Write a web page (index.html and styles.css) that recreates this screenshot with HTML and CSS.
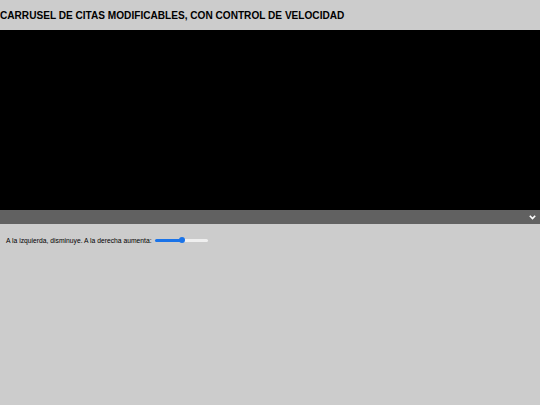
FILE: index.html
```html
<!DOCTYPE html>
<html lang="es">
<head>
<meta charset="utf-8">
<title>Carrusel de citas</title>
<link rel="stylesheet" href="styles.css">
</head>
<body>
<header class="header">
  <h1 class="title">CARRUSEL DE CITAS MODIFICABLES, CON CONTROL DE VELOCIDAD</h1>
</header>
<main>
  <div class="stage"></div>
  <div class="selectbar">
    <svg class="chevron" width="7" height="5" viewBox="0 0 7 5"><path d="M0.8 0.8 L3.5 3.6 L6.2 0.8" fill="none" stroke="#fff" stroke-width="1.6"/></svg>
  </div>
  <div class="controls">
    <label class="label" for="speed">A la izquierda, disminuye. A la derecha aumenta:</label>
    <input id="speed" class="slider" type="range" min="0" max="100" value="52">
  </div>
</main>
</body>
</html>
```
FILE: styles.css
```css
html, body {
  margin: 0;
  padding: 0;
  background: #cccccc;
  font-family: "Liberation Sans", Arial, sans-serif;
}
.header {
  height: 30px;
  display: flex;
  align-items: center;
}
.title {
  margin: 0;
  font-size: 10.1px;
  font-weight: bold;
  color: #000;
}
.stage {
  height: 180px;
  background: #000;
}
.selectbar {
  height: 14px;
  background: #616161;
  display: flex;
  align-items: center;
  justify-content: flex-end;
  padding-right: 4px;
}
.chevron {
  display: block;
}
.controls {
  display: flex;
  align-items: center;
  padding: 9px 0 0 6px;
  height: 14px;
}
.label {
  font-size: 6.75px;
  color: #000;
  margin-right: 3px;
}
.slider {
  -webkit-appearance: none;
  appearance: none;
  width: 53px;
  height: 3px;
  margin: 0;
  border-radius: 2px;
  background: linear-gradient(to right, #1a73e8 0%, #1a73e8 52%, #efefef 52%, #efefef 100%);
  outline: none;
}
.slider::-webkit-slider-thumb {
  -webkit-appearance: none;
  appearance: none;
  width: 6px;
  height: 6px;
  border-radius: 50%;
  background: #1a73e8;
  border: none;
}
```
